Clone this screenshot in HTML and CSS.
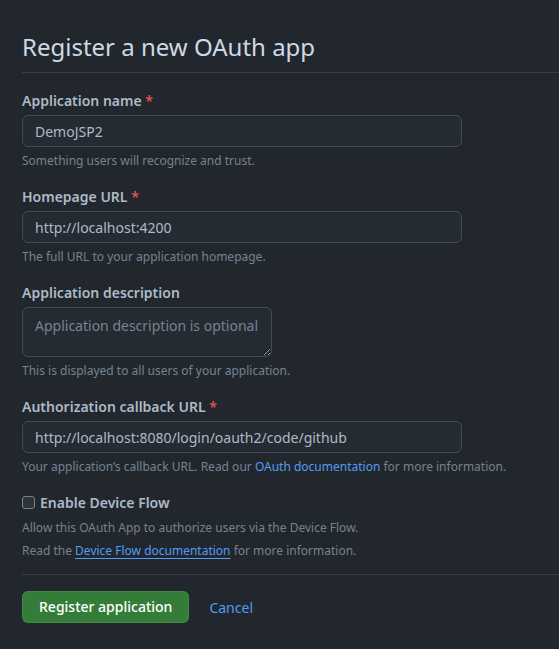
FILE: index.html
```html
<!DOCTYPE html>
<html>
<head>
<meta charset="utf-8">
<link rel="stylesheet" href="styles.css">
</head>
<body>
<div class="page">
  <div class="subhead">
    <h2 class="subhead-heading">Register a new OAuth app</h2>
  </div>
  <form class="form">
    <div class="group">
      <label class="label">Application name <span class="req">*</span></label>
      <input class="input" type="text" value="DemoJSP2">
      <p class="note">Something users will recognize and trust.</p>
    </div>
    <div class="group">
      <label class="label">Homepage URL <span class="req">*</span></label>
      <input class="input" type="text" value="http://localhost:4200">
      <p class="note">The full URL to your application homepage.</p>
    </div>
    <div class="group">
      <label class="label">Application description</label>
      <textarea class="textarea" placeholder="Application description is optional"></textarea>
      <p class="note">This is displayed to all users of your application.</p>
    </div>
    <div class="group">
      <label class="label">Authorization callback URL <span class="req">*</span></label>
      <input class="input" type="text" value="http://localhost:8080/login/oauth2/code/github">
      <p class="note">Your application’s callback URL. Read our <a class="link" href="#">OAuth documentation</a> for more information.</p>
    </div>
    <div class="check-group">
      <label class="check-label"><span class="checkbox"></span>Enable Device Flow</label>
      <p class="check-note first">Allow this OAuth App to authorize users via the Device Flow.</p>
      <p class="check-note">Read the <a class="link underline" href="#">Device Flow documentation</a> for more information.</p>
    </div>
    <div class="actions">
      <button class="btn-primary" type="button">Register application</button>
      <a class="cancel" href="#">Cancel</a>
    </div>
  </form>
</div>
</body>
</html>
```
FILE: styles.css
```css
html, body {
  margin: 0;
  padding: 0;
  background: #22272e;
}
body {
  font-family: "Noto Sans", "Liberation Sans", sans-serif;
  font-size: 14px;
  line-height: 1.5;
  color: #adbac7;
}
.page {
  padding: 29px 0 0 22px;
}
.subhead {
  border-bottom: 1px solid #373e47;
  padding-bottom: 7px;
  margin-bottom: 17px;
}
.subhead-heading {
  margin: 0;
  font-size: 24px;
  font-weight: 400;
  line-height: 36px;
  color: #cdd9e5;
}
.form {
  margin: 0;
}
.group {
  display: flex;
  flex-direction: column;
  align-items: flex-start;
  margin-bottom: 16px;
}
.label {
  font-weight: 600;
  font-size: 14px;
  line-height: 21px;
  margin-bottom: 4px;
  color: #adbac7;
}
.req {
  color: #e5534b;
}
.input, .textarea {
  box-sizing: border-box;
  font-family: "Noto Sans", "Liberation Sans", sans-serif;
  font-size: 14px;
  line-height: 20px;
  color: #adbac7;
  background: #252b33;
  border: 1px solid #444c56;
  border-radius: 6px;
  padding: 5px 12px;
  outline: none;
}
.input {
  width: 440px;
  height: 32px;
}
.textarea {
  width: 250px;
  height: 50px;
  resize: vertical;
  padding: 8px 12px;
}
.textarea::placeholder {
  color: #768390;
}
.note {
  margin: 5px 0 0;
  font-size: 12px;
  line-height: 18px;
  color: #768390;
}
.link {
  color: #539bf5;
  text-decoration: none;
}
.underline {
  text-decoration: underline;
  text-underline-offset: 3px;
}
.check-group {
  margin-top: 13px;
  padding-bottom: 12px;
  border-bottom: 1px solid #373e47;
}
.check-label {
  display: flex;
  align-items: center;
  font-weight: 600;
  line-height: 21px;
  color: #adbac7;
}
.checkbox {
  box-sizing: border-box;
  width: 13px;
  height: 13px;
  border: 1px solid #768390;
  border-radius: 3px;
  background: #2d333b;
  margin: 0 5px 0 0;
}
.check-note {
  margin: 0;
  font-size: 12px;
  line-height: 23px;
  color: #768390;
}
.check-note.first {
  margin-top: 3px;
}
.actions {
  display: flex;
  align-items: center;
  gap: 20px;
  padding-top: 16px;
}
.btn-primary {
  font-family: "Noto Sans", "Liberation Sans", sans-serif;
  font-size: 14px;
  font-weight: 500;
  line-height: 20px;
  white-space: nowrap;
  color: #ffffff;
  background: #347d39;
  border: 1px solid rgba(205, 217, 229, 0.1);
  border-radius: 6px;
  padding: 5px 16px;
  height: 32px;
}
.cancel {
  color: #539bf5;
  text-decoration: none;
  font-size: 14px;
}
```
